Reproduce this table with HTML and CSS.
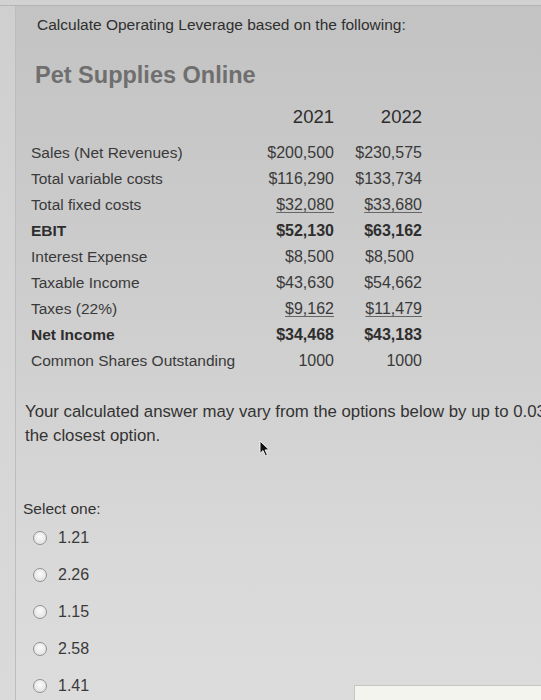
FILE: index.html
```html
<!DOCTYPE html>
<html lang="en">
<head>
<meta charset="utf-8">
<title>Operating Leverage</title>
<link rel="stylesheet" href="styles.css">
</head>
<body>
<div class="topbar"></div>
<div class="frame">
  <div class="gutter"></div>
  <main class="main">
    <p class="prompt">Calculate Operating Leverage based on the following:</p>
    <h2 class="company">Pet Supplies Online</h2>
    <div class="fin">
      <span class="head"></span><span class="head num">2021</span><span class="head num">2022</span>

      <span class="lbl">Sales (Net Revenues)</span><span class="num">$200,500</span><span class="num">$230,575</span>
      <span class="lbl">Total variable costs</span><span class="num">$116,290</span><span class="num">$133,734</span>
      <span class="lbl">Total fixed costs</span><span class="num"><u>$32,080</u></span><span class="num"><u>$33,680</u></span>
      <span class="lbl bold">EBIT</span><span class="num bold">$52,130</span><span class="num bold">$63,162</span>
      <span class="lbl">Interest Expense</span><span class="num">$8,500</span><span class="num short">$8,500</span>
      <span class="lbl">Taxable Income</span><span class="num">$43,630</span><span class="num">$54,662</span>
      <span class="lbl">Taxes (22%)</span><span class="num"><u>$9,162</u></span><span class="num"><u>$11,479</u></span>
      <span class="lbl bold">Net Income</span><span class="num bold">$34,468</span><span class="num bold">$43,183</span>
      <span class="lbl">Common Shares Outstanding</span><span class="num">1000</span><span class="num">1000</span>
    </div>
    <p class="note"><span class="line">Your calculated answer may vary from the options below by up to 0.03.</span><span class="line">the closest option.</span></p>
    <p class="select">Select one:</p>
    <ul class="options">
      <li class="opt"><span class="radio"></span><span>1.21</span></li>
      <li class="opt"><span class="radio"></span><span>2.26</span></li>
      <li class="opt"><span class="radio"></span><span>1.15</span></li>
      <li class="opt"><span class="radio"></span><span>2.58</span></li>
      <li class="opt"><span class="radio"></span><span>1.41</span></li>
    </ul>
    <svg class="cursor" width="12" height="17" viewBox="0 0 12 17"><path d="M1 1 L1 13.5 L4 10.6 L6.4 15.8 L8.4 14.9 L6.1 9.9 L10.3 9.9 Z" fill="#111" stroke="#f4f4f4" stroke-width="1"/></svg>
    <div class="panel"></div>
  </main>
</div>
</body>
</html>
```
FILE: styles.css
```css
html, body {
  margin: 0;
  padding: 0;
  overflow: hidden;
}
body {
  width: 541px;
  height: 700px;
  font-family: "Liberation Sans", Arial, sans-serif;
  color: #333;
  background: #cbcbcb;
}
.topbar {
  height: 5px;
  background: #d2d2d2;
  border-bottom: 1px solid #b4b4b4;
}
.frame {
  display: flex;
  height: 694px;
}
.gutter {
  width: 15px;
  flex: none;
  background: linear-gradient(to bottom, #cfcfcf, #d6d6d6 60%, #dadada);
  border-right: 1px solid #bdbdbd;
}
.main {
  position: relative;
  flex: 1;
  overflow: hidden;
  padding-top: 10px;
  background: linear-gradient(to bottom, #c3c3c3 0%, #c9c9c9 25%, #d1d1d1 55%, #d9d9d9 80%, #dcdcdc 100%);
}
.prompt {
  margin: 0 0 0 21px;
  font-size: 15.5px;
  line-height: 18px;
  color: #2f2f2f;
}
.company {
  margin: 27px 0 0 19px;
  font-size: 23.5px;
  line-height: 28px;
  font-weight: bold;
  color: #6f6f6f;
}
.fin {
  display: grid;
  grid-template-columns: 233px 70px 88px;
  grid-template-rows: 35px;
  grid-auto-rows: 26px;
  align-items: center;
  margin: 16px 0 0 15px;
  font-size: 15.5px;
  color: #3a3a3a;
}
.fin .head {
  height: 24px;
  line-height: 24px;
  font-size: 18.5px;
  color: #2d2d2d;
  align-self: start;
}
.fin .num {
  text-align: right;
  font-size: 16px;
  white-space: nowrap;
}
.fin .head.num { font-size: 18.5px; }
.fin .num.short { padding-right: 8px; }
.fin .bold { font-weight: bold; color: #2e2e2e; }
.fin u {
  text-decoration-color: #666;
  text-underline-offset: 2px;
}
.note {
  margin: 26px 0 0 9px;
  font-size: 16.8px;
  line-height: 24px;
  color: #333;
}
.note .line {
  display: block;
  white-space: nowrap;
}
.select {
  margin: 51px 0 0 7px;
  font-size: 15.5px;
  line-height: 20px;
  color: #333;
}
.options {
  list-style: none;
  margin: 0 0 0 17px;
  padding: 0;
}
.opt {
  display: flex;
  align-items: center;
  gap: 11px;
  height: 37px;
  font-size: 16px;
  color: #3a3a3a;
}
.radio {
  width: 12px;
  height: 12px;
  border-radius: 50%;
  border: 1px solid #929292;
  background: radial-gradient(circle at 50% 40%, #fbfbfb, #e2e2e2 80%);
  flex: none;
}
.cursor {
  position: absolute;
  left: 243px;
  top: 434px;
}
.panel {
  position: absolute;
  left: 338px;
  top: 679px;
  width: 220px;
  height: 40px;
  background: #f4f4ef;
  border: 1px solid #c7c7c2;
}
```
